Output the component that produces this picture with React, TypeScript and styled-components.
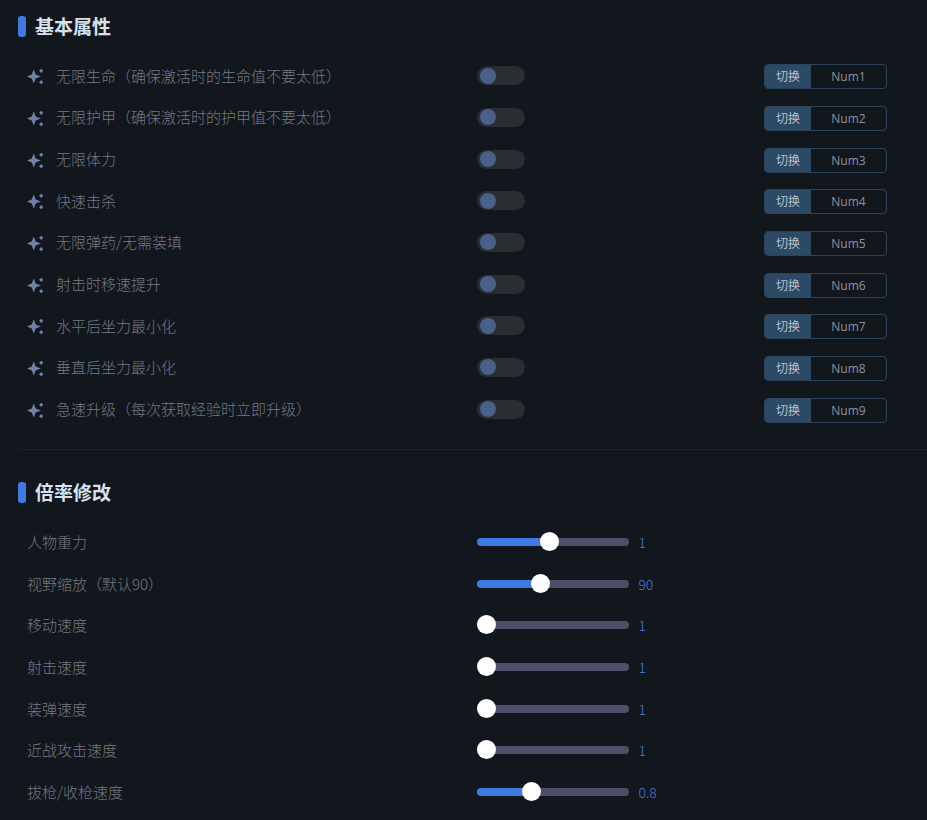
import React, { useState } from "react";
import styled, { createGlobalStyle } from "styled-components";

const GlobalStyle = createGlobalStyle`
  *, *::before, *::after { box-sizing: border-box; }
  body {
    margin: 0;
    background: #12161d;
    font-family: "Open Sans", "Noto Sans CJK SC", sans-serif;
  }
`;

const Page = styled.main`
  padding: 15px 0 6px 18px;
`;

const Section = styled.section`
  & + & {
    margin-top: 19px;
    padding-top: 31px;
    border-top: 1px solid #1c2229;
  }
`;

const Heading = styled.h2`
  display: flex;
  align-items: center;
  gap: 9px;
  margin: 0 0 17px;
  font-size: 19px;
  line-height: 21px;
  font-weight: 700;
  color: #d6e2ee;

  &::before {
    content: "";
    width: 8px;
    height: 21px;
    border-radius: 3px;
    background: #3e7ae0;
  }
`;

const HeadingText = styled.span`
  padding-top: 2px;
`;

const Rows = styled.ul<{ $height: number }>`
  display: grid;
  grid-auto-rows: 1fr;
  min-height: ${(p) => p.$height}px;
  margin: 0;
  padding: 0 40px 0 9px;
  list-style: none;
`;

const Row = styled.li`
  display: grid;
  grid-template-columns: 11fr 7fr 123px;
  align-items: center;
`;

const Label = styled.label`
  display: flex;
  align-items: center;
  gap: 12px;
  font-family: "Noto Sans CJK SC", sans-serif;
  font-size: 15px;
  line-height: 22px;
  font-weight: 300;
  color: #727983;
`;

const SparkIcon = styled.svg`
  flex: none;
  width: 17px;
  height: 17px;
  margin-top: 2px;
  fill: #7080ac;
`;

const Switch = styled.input`
  appearance: none;
  display: flex;
  align-items: center;
  width: 48px;
  height: 19px;
  margin: 0;
  padding: 0 3px;
  border-radius: 10px;
  background: #2a2e33;
  cursor: pointer;

  &::before {
    content: "";
    width: 16px;
    height: 16px;
    border-radius: 50%;
    background: #4b5f8b;
  }

  &:checked {
    justify-content: flex-end;
  }

  &:checked::before {
    background: #3e7ae0;
  }
`;

const Hotkey = styled.div`
  display: grid;
  grid-template-columns: 46px 1fr;
  height: 25px;
  margin-top: 2px;
  border: 1px solid #2c435a;
  border-radius: 4px;
  overflow: hidden;
`;

const HotkeyButton = styled.button<{ $filled?: boolean }>`
  padding: 0;
  border: 0;
  background: ${(p) => (p.$filled ? "#2c4a66" : "transparent")};
  color: ${(p) => (p.$filled ? "#b9c2cb" : "#8c939c")};
  font-family: inherit;
  font-size: 12px;
  line-height: 23px;
  cursor: pointer;
`;

const SliderGroup = styled.div`
  display: flex;
  align-items: center;
  gap: 9px;
`;

const Slider = styled.input`
  appearance: none;
  width: 152px;
  height: 19px;
  margin: 0;
  background: transparent;
  cursor: pointer;

  &::-webkit-slider-runnable-track {
    height: 8px;
    border-radius: 4px;
    background: linear-gradient(#3e7ae0, #3e7ae0) 0 0 / var(--fill) 100% no-repeat #4d4f69;
  }

  &::-webkit-slider-thumb {
    appearance: none;
    width: 19px;
    height: 19px;
    margin-top: -6px;
    border-radius: 50%;
    background: #fff;
  }
`;

const Value = styled.output`
  font-family: "Noto Sans CJK SC", sans-serif;
  font-size: 14px;
  line-height: 20px;
  font-weight: 300;
  color: #4a7bdc;
`;

const toggles = [
  "无限生命（确保激活时的生命值不要太低）",
  "无限护甲（确保激活时的护甲值不要太低）",
  "无限体力",
  "快速击杀",
  "无限弹药/无需装填",
  "射击时移速提升",
  "水平后坐力最小化",
  "垂直后坐力最小化",
  "急速升级（每次获取经验时立即升级）",
];

type Rate = { name: string; value: number; min: number; max: number; step: number };

const rates: Rate[] = [
  { name: "人物重力", value: 1, min: 0.06, max: 2.06, step: 0.01 },
  { name: "视野缩放（默认90）", value: 90, min: 50, max: 150, step: 1 },
  { name: "移动速度", value: 1, min: 1, max: 10, step: 0.1 },
  { name: "射击速度", value: 1, min: 1, max: 10, step: 0.1 },
  { name: "装弹速度", value: 1, min: 1, max: 10, step: 0.1 },
  { name: "近战攻击速度", value: 1, min: 1, max: 10, step: 0.1 },
  { name: "拔枪/收枪速度", value: 0.8, min: 0.2, max: 2, step: 0.1 },
];

function Spark() {
  return (
    <SparkIcon viewBox="0 0 24 24" aria-hidden="true">
      <path d="M9.500 2L12.300 9.200 19.500 12 12.300 14.800 9.500 22 6.700 14.800 0 12 6.700 9.200z" />
      <path d="M20 1l3 3-3 3-3-3zM20 17l3 3-3 3-3-3z" />
    </SparkIcon>
  );
}

function ToggleRow({ name, index }: { name: string; index: number }) {
  const [on, setOn] = useState(false);
  const id = `toggle-${index}`;
  return (
    <Row>
      <Label htmlFor={id}>
        <Spark />
        {name}
      </Label>
      <Switch id={id} type="checkbox" checked={on} onChange={() => setOn(!on)} />
      <Hotkey>
        <HotkeyButton type="button" $filled onClick={() => setOn(!on)}>
          切换
        </HotkeyButton>
        <HotkeyButton type="button">Num{index}</HotkeyButton>
      </Hotkey>
    </Row>
  );
}

function SliderRow({ rate, index }: { rate: Rate; index: number }) {
  const [value, setValue] = useState(rate.value);
  const id = `rate-${index}`;
  const fill = ((value - rate.min) / (rate.max - rate.min)) * 100;
  return (
    <Row>
      <Label htmlFor={id}>{rate.name}</Label>
      <SliderGroup>
        <Slider
          id={id}
          type="range"
          min={rate.min}
          max={rate.max}
          step={rate.step}
          value={value}
          onChange={(e) => setValue(Number(e.target.value))}
          style={{ "--fill": `${fill}%` } as React.CSSProperties}
        />
        <Value htmlFor={id}>{value}</Value>
      </SliderGroup>
    </Row>
  );
}

export default function App() {
  return (
    <>
      <GlobalStyle />
      <Page>
        <Section>
          <Heading>
            <HeadingText>基本属性</HeadingText>
          </Heading>
          <Rows $height={375}>
            {toggles.map((name, i) => (
              <ToggleRow key={name} name={name} index={i + 1} />
            ))}
          </Rows>
        </Section>
        <Section>
          <Heading>
            <HeadingText>倍率修改</HeadingText>
          </Heading>
          <Rows $height={292}>
            {rates.map((rate, i) => (
              <SliderRow key={rate.name} rate={rate} index={i + 1} />
            ))}
          </Rows>
        </Section>
      </Page>
    </>
  );
}
